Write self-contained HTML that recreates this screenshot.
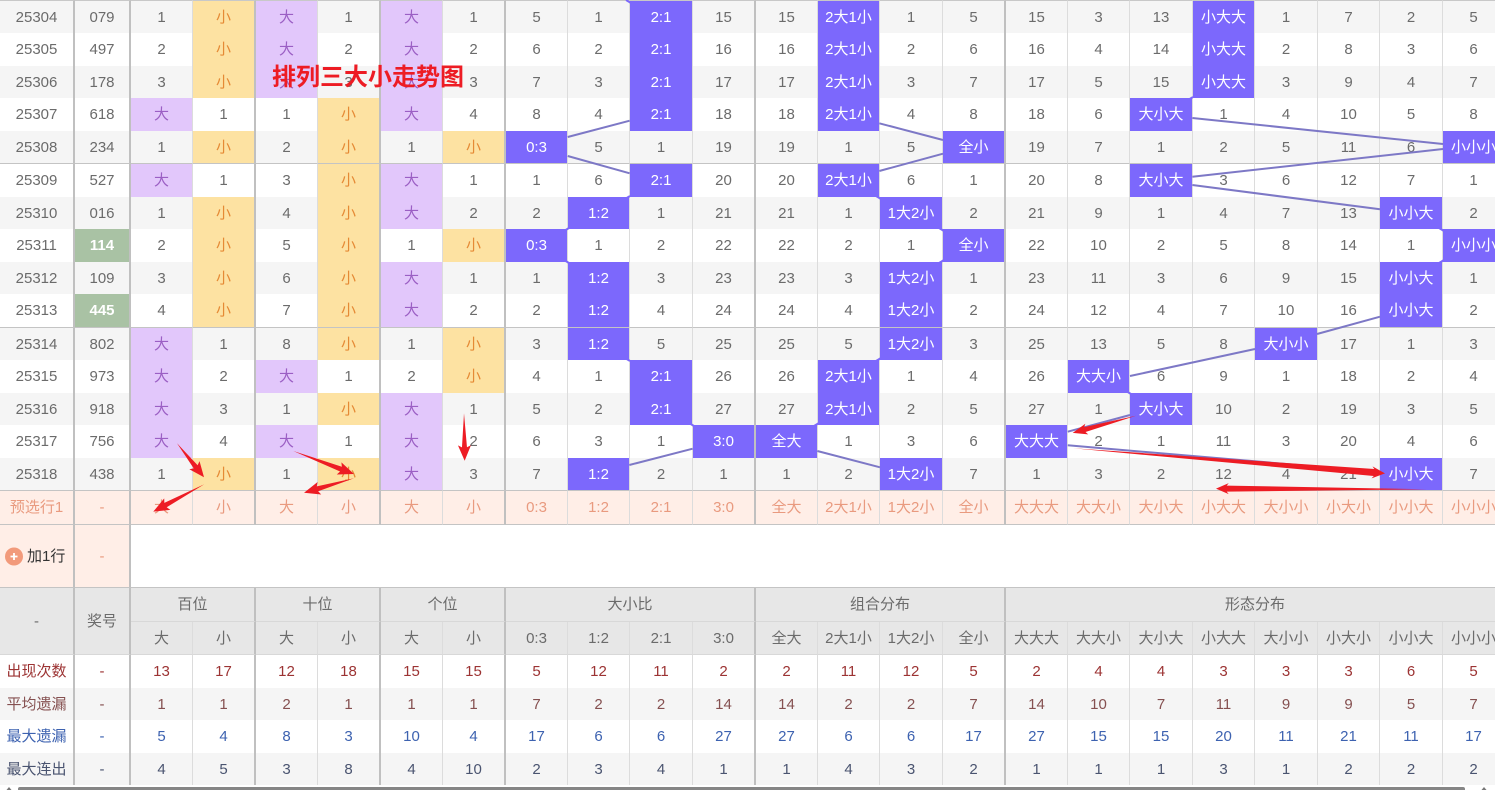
<!DOCTYPE html>
<html lang="zh">
<head>
<meta charset="utf-8">
<title>排列三大小走势图</title>
<style>
html,body{margin:0;padding:0;width:1498px;height:790px;overflow:hidden;background:#fff}
#w{position:absolute;left:0;top:0;width:1495px;height:785px;overflow:hidden}
table{border-collapse:separate;border-spacing:0;table-layout:fixed;width:1505px;font:15px "Liberation Sans","Noto Sans CJK SC",sans-serif;color:#6b6b6b}
td{box-sizing:border-box;padding:0;text-align:center;vertical-align:middle;line-height:17px;white-space:nowrap;overflow:hidden;border-right:1px solid #dcdcdc}
tr.r td:nth-child(1),tr.r td:nth-child(2),tr.r td:nth-child(4),tr.r td:nth-child(6),tr.r td:nth-child(8),tr.r td:nth-child(12),tr.r td:nth-child(16){border-right:2px solid #c0c0c0}
tr.a td{height:33px}
tr.b td{height:32px}
tr.c td{height:34px}
tr.s td{background:#f5f5f5}
tr.l td{border-bottom:1px solid #c4c4c4}
tr.f td{border-top:1px solid #c8c8c8}
tr.r td.d{background:#e2c7fb;color:#9b5fc4}
tr.r td.x{background:#fde2a2;color:#e58a35}
tr.r td.p{background:#7c68fc;color:#fff}
tr.r td.g{background:#a9c2a4;color:#fff;font-weight:bold}
tr.y td{background:#ffeee7;color:#e99a7f;border-bottom:1px solid #c4c4c4}
tr.m td.o{background:#ffeee7;height:63px;border-bottom:1px solid #c4c4c4;border-right:2px solid #c0c0c0}
tr.m td.n{border-bottom:1px solid #c4c4c4}
tr.h td{background:#e7e7e7;border-bottom:1px solid #d8d8d8;color:#6b6b6b}
td.t{border-right:2px solid #c0c0c0!important}
tr.k1 td{color:#9c3333}
tr.k2 td{color:#855050}
tr.k3 td{color:#3d62b0}
tr.k4 td{color:#4a5470}
#add{display:inline-block;vertical-align:middle;color:#333;margin-left:27px}
#ov{position:absolute;left:0;top:0;width:1498px;height:790px;pointer-events:none}
#ti{position:absolute;left:272px;top:62px;font:bold 24px/32px "Liberation Sans","Noto Sans CJK SC",sans-serif;color:#ed1c24;white-space:nowrap}
#sb{position:absolute;left:0;top:785px;width:1498px;height:5px;background:#fff}
#th{position:absolute;left:18px;top:2px;width:1447px;height:3px;background:#868686;border-radius:2px 2px 0 0}
</style>
</head>
<body>
<div id="w">
<table>
<colgroup><col style="width:75px"><col style="width:56px"><col style="width:62px"><col style="width:63px"><col style="width:62px"><col style="width:63px"><col style="width:62px"><col style="width:63px"><col style="width:62px"><col style="width:62px"><col style="width:63px"><col style="width:63px"><col style="width:62px"><col style="width:62px"><col style="width:63px"><col style="width:63px"><col style="width:62px"><col style="width:62px"><col style="width:63px"><col style="width:62px"><col style="width:63px"><col style="width:62px"><col style="width:63px"><col style="width:62px"></colgroup>
<tr class="r a s f"><td>25304<td>079<td>1<td class=x>小<td class=d>大<td>1<td class=d>大<td>1<td>5<td>1<td class=p>2:1<td>15<td>15<td class=p>2大1小<td>1<td>5<td>15<td>3<td>13<td class=p>小大大<td>1<td>7<td>2<td>5</tr>
<tr class="r a"><td>25305<td>497<td>2<td class=x>小<td class=d>大<td>2<td class=d>大<td>2<td>6<td>2<td class=p>2:1<td>16<td>16<td class=p>2大1小<td>2<td>6<td>16<td>4<td>14<td class=p>小大大<td>2<td>8<td>3<td>6</tr>
<tr class="r b s"><td>25306<td>178<td>3<td class=x>小<td class=d>大<td>3<td class=d>大<td>3<td>7<td>3<td class=p>2:1<td>17<td>17<td class=p>2大1小<td>3<td>7<td>17<td>5<td>15<td class=p>小大大<td>3<td>9<td>4<td>7</tr>
<tr class="r a"><td>25307<td>618<td class=d>大<td>1<td>1<td class=x>小<td class=d>大<td>4<td>8<td>4<td class=p>2:1<td>18<td>18<td class=p>2大1小<td>4<td>8<td>18<td>6<td class=p>大小大<td>1<td>4<td>10<td>5<td>8</tr>
<tr class="r a s l"><td>25308<td>234<td>1<td class=x>小<td>2<td class=x>小<td>1<td class=x>小<td class=p>0:3<td>5<td>1<td>19<td>19<td>1<td>5<td class=p>全小<td>19<td>7<td>1<td>2<td>5<td>11<td>6<td class=p>小小小</tr>
<tr class="r a"><td>25309<td>527<td class=d>大<td>1<td>3<td class=x>小<td class=d>大<td>1<td>1<td>6<td class=p>2:1<td>20<td>20<td class=p>2大1小<td>6<td>1<td>20<td>8<td class=p>大小大<td>3<td>6<td>12<td>7<td>1</tr>
<tr class="r b s"><td>25310<td>016<td>1<td class=x>小<td>4<td class=x>小<td class=d>大<td>2<td>2<td class=p>1:2<td>1<td>21<td>21<td>1<td class=p>1大2小<td>2<td>21<td>9<td>1<td>4<td>7<td>13<td class=p>小小大<td>2</tr>
<tr class="r a"><td>25311<td class=g>114<td>2<td class=x>小<td>5<td class=x>小<td>1<td class=x>小<td class=p>0:3<td>1<td>2<td>22<td>22<td>2<td>1<td class=p>全小<td>22<td>10<td>2<td>5<td>8<td>14<td>1<td class=p>小小小</tr>
<tr class="r b s"><td>25312<td>109<td>3<td class=x>小<td>6<td class=x>小<td class=d>大<td>1<td>1<td class=p>1:2<td>3<td>23<td>23<td>3<td class=p>1大2小<td>1<td>23<td>11<td>3<td>6<td>9<td>15<td class=p>小小大<td>1</tr>
<tr class="r c l"><td>25313<td class=g>445<td>4<td class=x>小<td>7<td class=x>小<td class=d>大<td>2<td>2<td class=p>1:2<td>4<td>24<td>24<td>4<td class=p>1大2小<td>2<td>24<td>12<td>4<td>7<td>10<td>16<td class=p>小小大<td>2</tr>
<tr class="r b s"><td>25314<td>802<td class=d>大<td>1<td>8<td class=x>小<td>1<td class=x>小<td>3<td class=p>1:2<td>5<td>25<td>25<td>5<td class=p>1大2小<td>3<td>25<td>13<td>5<td>8<td class=p>大小小<td>17<td>1<td>3</tr>
<tr class="r a"><td>25315<td>973<td class=d>大<td>2<td class=d>大<td>1<td>2<td class=x>小<td>4<td>1<td class=p>2:1<td>26<td>26<td class=p>2大1小<td>1<td>4<td>26<td class=p>大大小<td>6<td>9<td>1<td>18<td>2<td>4</tr>
<tr class="r b s"><td>25316<td>918<td class=d>大<td>3<td>1<td class=x>小<td class=d>大<td>1<td>5<td>2<td class=p>2:1<td>27<td>27<td class=p>2大1小<td>2<td>5<td>27<td>1<td class=p>大小大<td>10<td>2<td>19<td>3<td>5</tr>
<tr class="r a"><td>25317<td>756<td class=d>大<td>4<td class=d>大<td>1<td class=d>大<td>2<td>6<td>3<td>1<td class=p>3:0<td class=p>全大<td>1<td>3<td>6<td class=p>大大大<td>2<td>1<td>11<td>3<td>20<td>4<td>6</tr>
<tr class="r a s l"><td>25318<td>438<td>1<td class=x>小<td>1<td class=x>小<td class=d>大<td>3<td>7<td class=p>1:2<td>2<td>1<td>1<td>2<td class=p>1大2小<td>7<td>1<td>3<td>2<td>12<td>4<td>21<td class=p>小小大<td>7</tr>
<tr class="r c y"><td>预选行1<td>-<td>大<td>小<td>大<td>小<td>大<td>小<td>0:3<td>1:2<td>2:1<td>3:0<td>全大<td>2大1小<td>1大2小<td>全小<td>大大大<td>大大小<td>大小大<td>小大大<td>大小小<td>小大小<td>小小大<td>小小小</tr>
<tr class="m"><td class=o style="text-align:left"><span id="add">加1行</span><td class=o style="color:#e99a7f">-<td class=n colspan="22" style="border-right:0"></tr>
<tr class="h c"><td class=t rowspan="2" style="height:67px">-<td class=t rowspan="2">奖号<td class=t colspan="2">百位<td class=t colspan="2">十位<td class=t colspan="2">个位<td class=t colspan="4">大小比<td class=t colspan="4">组合分布<td colspan="8">形态分布</tr>
<tr class="h a"><td>大<td class=t>小<td>大<td class=t>小<td>大<td class=t>小<td>0:3<td>1:2<td>2:1<td class=t>3:0<td>全大<td>2大1小<td>1大2小<td class=t>全小<td>大大大<td>大大小<td>大小大<td>小大大<td>大小小<td>小大小<td>小小大<td>小小小</tr>
<tr class="r a k1"><td>出现次数<td>-<td>13<td>17<td>12<td>18<td>15<td>15<td>5<td>12<td>11<td>2<td>2<td>11<td>12<td>5<td>2<td>4<td>4<td>3<td>3<td>3<td>6<td>5</tr>
<tr class="r b s k2"><td>平均遗漏<td>-<td>1<td>1<td>2<td>1<td>1<td>1<td>7<td>2<td>2<td>14<td>14<td>2<td>2<td>7<td>14<td>10<td>7<td>11<td>9<td>9<td>5<td>7</tr>
<tr class="r a k3"><td>最大遗漏<td>-<td>5<td>4<td>8<td>3<td>10<td>4<td>17<td>6<td>6<td>27<td>27<td>6<td>6<td>17<td>27<td>15<td>15<td>20<td>11<td>21<td>11<td>17</tr>
<tr class="r b s k4"><td>最大连出<td>-<td>4<td>5<td>3<td>8<td>4<td>10<td>2<td>3<td>4<td>1<td>1<td>4<td>3<td>2<td>1<td>1<td>1<td>3<td>1<td>2<td>2<td>2</tr>
</table>
</div>
<svg id="ov" viewBox="0 0 1498 790" xmlns="http://www.w3.org/2000/svg">
<g stroke="#7d78c6" stroke-width="2" fill="none">
<path d="M567.7 137L629.7 120.7"/>
<path d="M567.7 156L629.7 173.3"/>
<path d="M879.3 123.3L943 140"/>
<path d="M943 153.7L879.3 171"/>
<path d="M1192.3 118L1443 144"/>
<path d="M1443 149L1192.3 176.7"/>
<path d="M1192.3 185L1380 209.3"/>
<path d="M1380 316.7L1317 334"/>
<path d="M1255 349L1130 376"/>
<path d="M1130 415L1067.7 431.7"/>
<path d="M1067.7 445.3L1380 472"/>
<path d="M629.3 465L692.7 448.7"/>
<path d="M817.3 451L880 467.3"/>
</g>
<g stroke="#7c68fc" stroke-width="2" fill="none">
<path d="M625 199L630 196"/><path d="M876 196L881 199"/><path d="M939 228L944 231"/><path d="M564 231L569 228"/><path d="M564 260L569 263"/><path d="M939 263L944 260"/><path d="M1439 228L1444 231"/><path d="M1439 263L1444 260"/><path d="M625 358L630 361"/><path d="M876 361L881 358"/><path d="M689 423L694 426"/><path d="M814 426L819 423"/><path d="M1126 391L1131 394"/><path d="M1188 100L1193 97"/><path d="M626 0L631 3"/>
</g>
<g fill="#ed1c24">
<polygon transform="translate(177 443.3) rotate(51.5)" points="0,0 30,2.5 28,6.5 43.4,0 28,-6.5 30,-2.5"/>
<polygon transform="translate(204.3 484.3) rotate(151.8)" points="0,0 44,2.5 42,6.5 57.9,0 42,-6.5 44,-2.5"/>
<polygon transform="translate(293.3 451) rotate(20.8)" points="0,0 51,2.5 49,6.5 64.9,0 49,-6.5 51,-2.5"/>
<polygon transform="translate(354 478.3) rotate(163.9)" points="0,0 38,2.5 36,6.5 52,0 36,-6.5 38,-2.5"/>
<polygon transform="translate(464 413.3) rotate(89.2)" points="0,0 34,2.5 32,6.5 47.4,0 32,-6.5 34,-2.5"/>
<polygon transform="translate(1136 415.7) rotate(164.8)" points="0,0 53,2.5 51,5.5 65.6,0 51,-5.5 53,-2.5"/>
<polygon transform="translate(1073 448.3) rotate(4.6)" points="0,0 302,3.5 300,6 313,0 300,-6 302,-3.5"/>
<polygon transform="translate(1426.7 489.3) rotate(180.2)" points="0,0 200,3 198,5.5 210.7,0 198,-5.5 200,-3"/>
</g>
<circle cx="14" cy="556.5" r="9" fill="#f29a7b"/>
<path d="M10.5 556.5H17.5M14 553V560" stroke="#fff" stroke-width="1.8" fill="none"/>
</svg>
<div id="ti">排列三大小走势图</div>
<div id="sb"><div id="th"></div>
<svg width="1498" height="5" style="position:absolute;left:0;top:0" xmlns="http://www.w3.org/2000/svg"><path d="M9 2L11.5 5H6.5Z" fill="#777"/><path d="M1484 2L1486.5 5H1481.5Z" fill="#777"/></svg>
</div>
</body>
</html>
